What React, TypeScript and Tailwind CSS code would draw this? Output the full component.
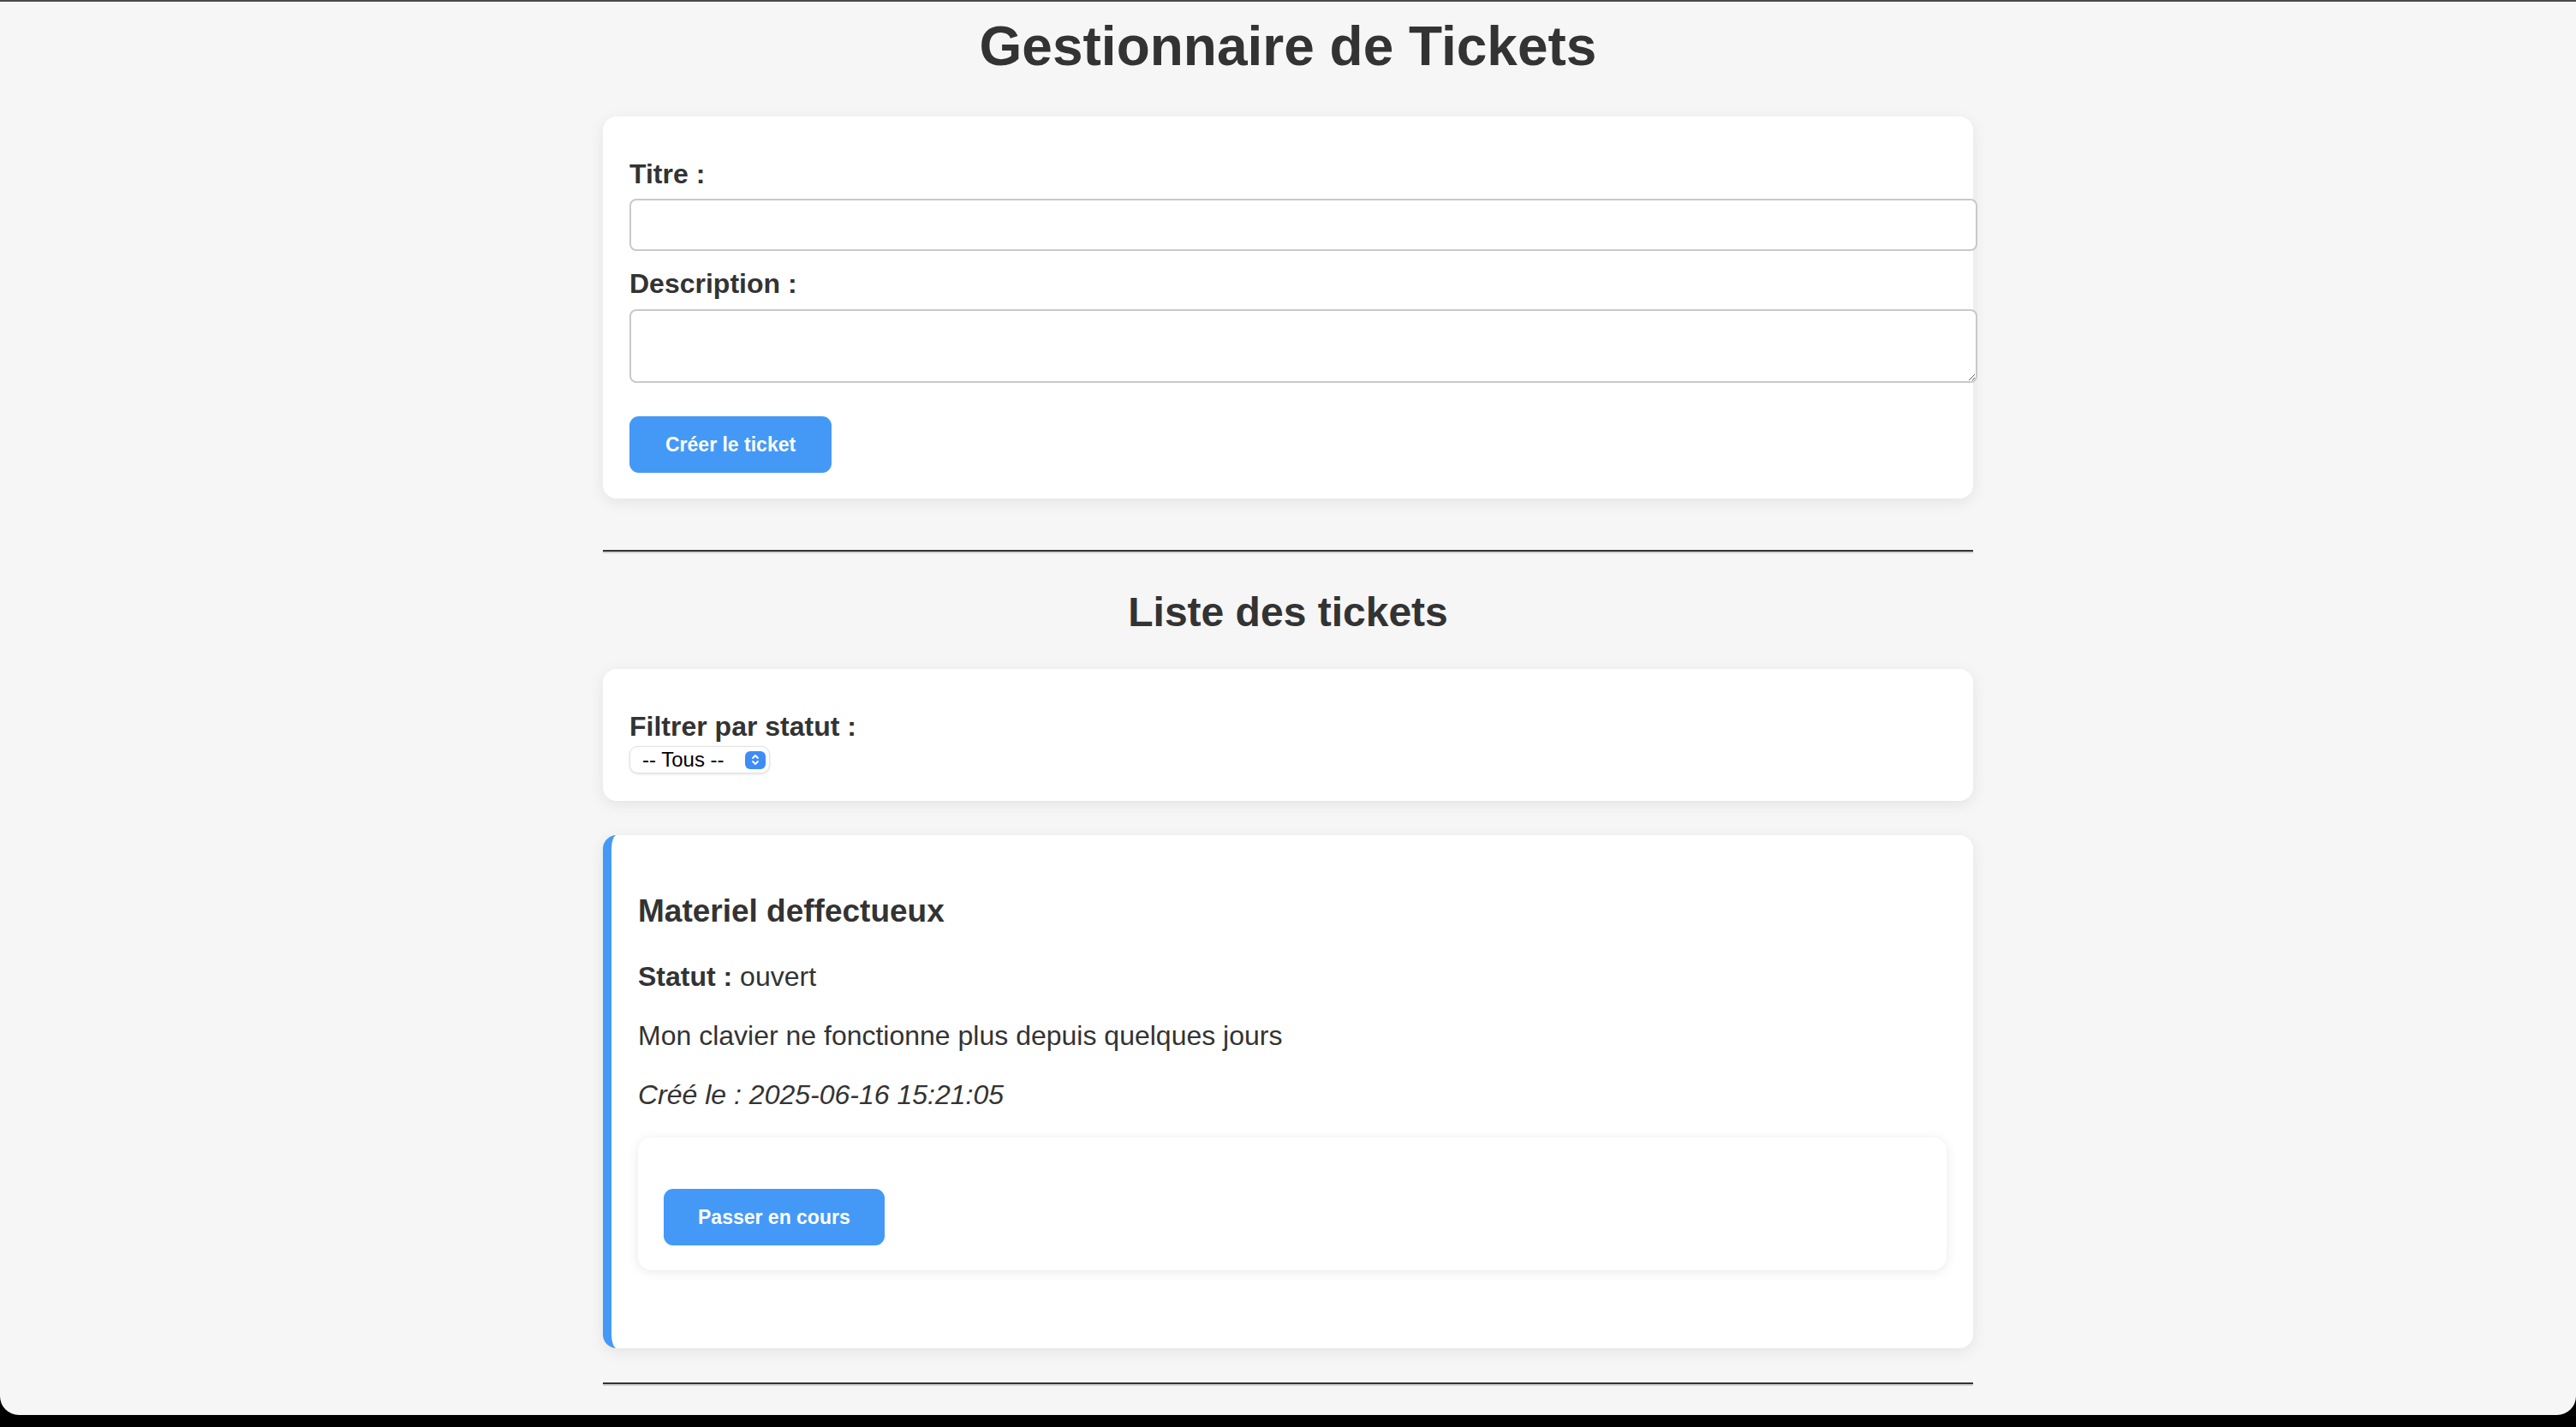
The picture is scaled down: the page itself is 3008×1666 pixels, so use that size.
import { useState } from "react";

type Ticket = {
  id: number;
  title: string;
  status: string;
  description: string;
  createdAt: string;
};

const tickets: Ticket[] = [
  {
    id: 1,
    title: "Materiel deffectueux",
    status: "ouvert",
    description: "Mon clavier ne fonctionne plus depuis quelques jours",
    createdAt: "2025-06-16 15:21:05",
  },
];

function SelectChevron() {
  return (
    <span className="flex h-[21px] w-[24px] items-center justify-center rounded-[6px] bg-[#3f8cf6]">
      <svg width="12" height="16" viewBox="0 0 12 16" fill="none">
        <path d="M3 6l3-3 3 3" stroke="white" strokeWidth="1.8" strokeLinecap="round" strokeLinejoin="round" />
        <path d="M3 10l3 3 3-3" stroke="white" strokeWidth="1.8" strokeLinecap="round" strokeLinejoin="round" />
      </svg>
    </span>
  );
}

export default function App() {
  const [title, setTitle] = useState("");
  const [description, setDescription] = useState("");

  return (
    <div className="min-h-[1666px] bg-black font-['Liberation_Sans',Arial,sans-serif]">
      <div className="h-[1652px] overflow-hidden rounded-b-[22px] border-t-2 border-[#4a4a4a] bg-[#f6f6f6] text-[#333]">
        <h1 className="pt-[15px] pb-[2px] text-center text-[64px] font-bold leading-[74px]">Gestionnaire de Tickets</h1>

        <div className="mx-auto w-[1600px]">
          {/* Create form */}
          <form
            className="mt-[43px] rounded-[16px] bg-white px-[31px] pt-[32px] pb-[30px] shadow-[0_4px_18px_rgba(0,0,0,0.08)]"
            onSubmit={(e) => e.preventDefault()}
          >
            <label className="mt-[17px] block text-[32px] font-bold leading-[37px]">Titre :</label>
            <input
              value={title}
              onChange={(e) => setTitle(e.target.value)}
              className="mt-[10px] block h-[61px] w-[1574px] rounded-[8px] border-2 border-[#c9c9c9] bg-white px-[16px] text-[26px] outline-none"
            />
            <label className="mt-[20px] block text-[32px] font-bold leading-[37px]">Description :</label>
            <textarea
              value={description}
              onChange={(e) => setDescription(e.target.value)}
              className="mt-[11px] block h-[86px] w-[1574px] rounded-[8px] border-2 border-[#c9c9c9] bg-white px-[16px] py-[12px] text-[26px] outline-none"
            />
            <button
              type="submit"
              className="mt-[39px] block h-[66px] rounded-[11px] bg-[#4499f7] px-[42px] text-[23px] font-bold text-white"
            >
              Créer le ticket
            </button>
          </form>

          <hr className="mt-[60px] border-t-2 border-b-2 border-t-[#333] border-b-[#d2d2d2]" />

          <h2 className="mt-[41px] text-center text-[48px] font-bold leading-[55px]">Liste des tickets</h2>

          {/* Filter */}
          <div className="mt-[39px] rounded-[16px] bg-white px-[31px] pt-[32px] pb-[32px] shadow-[0_4px_18px_rgba(0,0,0,0.08)]">
            <label className="mt-[17px] block text-[32px] font-bold leading-[37px]">Filtrer par statut :</label>
            <div className="mt-[4px] flex h-[32px] w-[164px] items-center justify-between rounded-[10px] border border-[#e2e2e2] bg-white pr-[4px] pl-[14px] text-[24px] text-black shadow-[0_1px_3px_rgba(0,0,0,0.12)]">
              <span>-- Tous --</span>
              <SelectChevron />
            </div>
          </div>

          {/* Tickets */}
          {tickets.map((t) => (
            <div
              key={t.id}
              className="mt-[40px] rounded-[16px] border-l-[10px] border-[#4499f7] bg-white pt-[32px] pr-[31px] pb-[91px] pl-[31px] shadow-[0_4px_18px_rgba(0,0,0,0.08)]"
            >
              <h3 className="mt-[35px] text-[37px] font-bold leading-[43px]">{t.title}</h3>
              <p className="mt-[37px] text-[32px] leading-[37px]">
                <strong>Statut :</strong> {t.status}
              </p>
              <p className="mt-[32px] text-[32px] leading-[37px]">{t.description}</p>
              <p className="mt-[32px] text-[32px] italic leading-[37px]">Créé le : {t.createdAt}</p>

              <div className="mt-[31px] rounded-[16px] bg-white px-[30px] pt-[60px] pb-[29px] shadow-[0_2px_14px_rgba(0,0,0,0.09)]">
                <button className="block h-[66px] rounded-[11px] bg-[#4499f7] px-[40px] text-[23px] font-bold text-white">
                  Passer en cours
                </button>
              </div>
            </div>
          ))}

          <hr className="mt-[40px] border-t-2 border-b-2 border-t-[#333] border-b-[#d2d2d2]" />
        </div>
      </div>
    </div>
  );
}
